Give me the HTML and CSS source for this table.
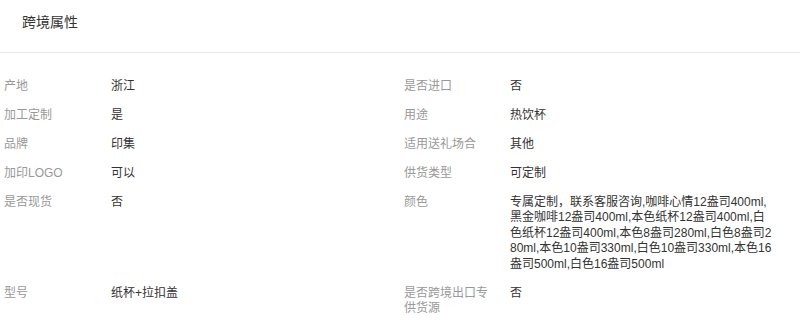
FILE: index.html
```html
<!DOCTYPE html>
<html lang="zh">
<head>
<meta charset="utf-8">
<link rel="stylesheet" href="styles.css">
</head>
<body>
<div class="panel">
  <div class="header"><span class="title">跨境属性</span></div>
  <div class="attrs">
    <div class="label">产地</div><div class="value">浙江</div>
    <div class="label">是否进口</div><div class="value">否</div>

    <div class="label">加工定制</div><div class="value">是</div>
    <div class="label">用途</div><div class="value">热饮杯</div>

    <div class="label">品牌</div><div class="value">印集</div>
    <div class="label">适用送礼场合</div><div class="value">其他</div>

    <div class="label">加印LOGO</div><div class="value">可以</div>
    <div class="label">供货类型</div><div class="value">可定制</div>

    <div class="label">是否现货</div><div class="value">否</div>
    <div class="label">颜色</div><div class="value">专属定制，联系客服咨询,咖啡心情12盎司400ml,黑金咖啡12盎司400ml,本色纸杯12盎司400ml,白色纸杯12盎司400ml,本色8盎司280ml,白色8盎司280ml,本色10盎司330ml,白色10盎司330ml,本色16盎司500ml,白色16盎司500ml</div>

    <div class="label">型号</div><div class="value">纸杯+拉扣盖</div>
    <div class="label">是否跨境出口专供货源</div><div class="value">否</div>
  </div>
</div>
</body>
</html>
```

FILE: styles.css
```css
html, body {
  margin: 0;
  padding: 0;
  background: #ffffff;
}

body {
  font-family: "Liberation Sans", "Noto Sans CJK SC", sans-serif;
  color: #333333;
}

.panel {
  width: 800px;
}

.header {
  padding: 12px 22px 20px;
  border-bottom: 1px solid #e8e8e8;
}

.title {
  display: block;
  font-size: 14px;
  line-height: 20px;
  color: #333333;
}

.attrs {
  display: grid;
  grid-template-columns: 107px 293px 106px 264px;
  padding: 19px 0 0 4px;
  font-size: 12px;
  line-height: 15.5px;
}

.label,
.value {
  padding: 6.75px 0;
}

.label {
  color: #999999;
  padding-right: 14px;
}

.value {
  color: #333333;
  word-break: break-all;
}
```
